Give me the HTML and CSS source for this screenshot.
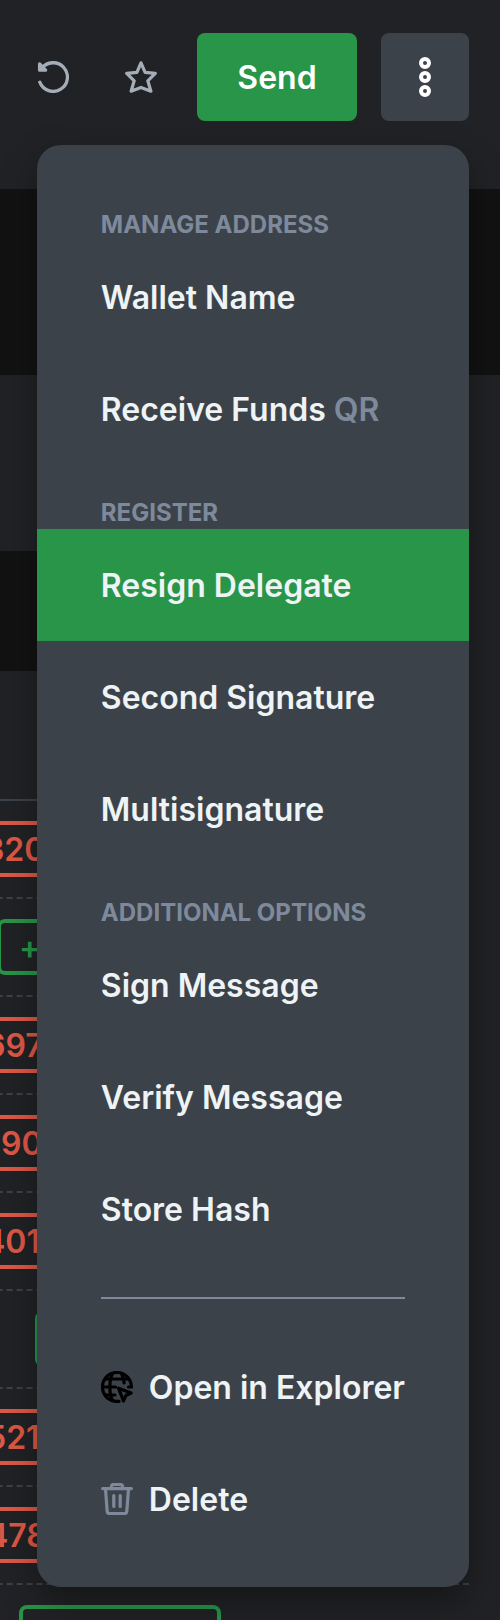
FILE: index.html
```html
<!DOCTYPE html>
<html lang="en">
<head>
<meta charset="utf-8">
<meta name="viewport" content="width=device-width, initial-scale=1">
<title>Wallet</title>
<link rel="stylesheet" href="styles.css">
</head>
<body>
<header class="toolbar">
  <div class="icon-buttons">
    <button class="icon-button" type="button" aria-label="Refresh">
      <svg class="icon" viewBox="0 0 32 32" fill="none" stroke="currentColor" stroke-width="3.3" stroke-linecap="round" stroke-linejoin="round"><path d="M2.8 21.2A14.3 14.3 0 1 0 4.6 7.6"/><path d="M2.6 3v6.2h6z" fill="currentColor"/></svg>
    </button>
    <button class="icon-button" type="button" aria-label="Star">
      <svg class="icon" viewBox="0 0 32 32" fill="none" stroke="currentColor" stroke-width="3.2" stroke-linecap="round" stroke-linejoin="round"><path d="M16 1.8l4.1 9.6 10.2 1-7.500 7.400 3.100 10.400-9.900-3.800-9.900 3.800 3.100-10.400-7.500-7.400 10.200-1z"/></svg>
    </button>
  </div>
  <div class="actions">
    <button class="send" type="button">Send</button>
    <div class="dropdown">
      <button class="more" type="button" aria-label="More options" aria-expanded="true">
        <svg class="dots" viewBox="0 0 12 40" fill="none" stroke="currentColor" stroke-width="4"><circle cx="6" cy="6" r="4"/><circle cx="6" cy="20" r="4"/><circle cx="6" cy="34" r="4"/></svg>
      </button>
      <nav class="menu" aria-label="Wallet options">
        <h2 class="menu-title">Manage Address</h2>
        <button class="menu-item" type="button">Wallet Name</button>
        <button class="menu-item" type="button"><span>Receive Funds <span class="hint">QR</span></span></button>
        <h2 class="menu-title">Register</h2>
        <button class="menu-item selected" type="button">Resign Delegate</button>
        <button class="menu-item" type="button">Second Signature</button>
        <button class="menu-item" type="button">Multisignature</button>
        <h2 class="menu-title">Additional Options</h2>
        <button class="menu-item" type="button">Sign Message</button>
        <button class="menu-item" type="button">Verify Message</button>
        <button class="menu-item" type="button">Store Hash</button>
        <hr class="divider">
        <button class="menu-item" type="button">
          <svg class="icon globe" viewBox="0 0 32 32" fill="none" stroke="currentColor" stroke-width="3.2" stroke-linecap="round" stroke-linejoin="round"><path d="M30.4 15.500A14.500 14.500 0 1 0 18 30.300"/><path d="M4.500 8h23M2 16h12.500M4.500 24H14M11.500 2.600C8 9 8 23 11.500 29.400M20.500 2.600c1.500 3 2.400 6 2.600 9.400M27.500 16h3"/><path d="M17.500 17.200l12.600 4.800-5.300 2.500-2.300 5.500z"/></svg>
          Open in Explorer
        </button>
        <button class="menu-item" type="button">
          <svg class="icon trash" viewBox="0 0 32 32" fill="none" stroke="currentColor" stroke-width="3.2" stroke-linecap="round" stroke-linejoin="round"><path d="M1.600 5.600h28.800M4.500 6l1.700 22.500q.2 2 2 2h15.600q1.800 0 2-2L27.500 6M10.500 5V3.500q0-2 2-2h7q2 0 2 2V5M12.800 12.500v11M19.200 12.500v11"/></svg>
          Delete
        </button>
      </nav>
    </div>
  </div>
</header>
<main>
  <section class="band band-tall"></section>
  <section class="summary"></section>
  <section class="band band-short"></section>
  <section class="transactions">
    <div class="table-head"></div>
    <div class="row"><span class="amount out" style="width:259px">320</span></div>
    <div class="row"><span class="amount in" style="width:224px">+</span></div>
    <div class="row"><span class="amount out" style="width:258px">697</span></div>
    <div class="row"><span class="amount out" style="width:242px">90</span></div>
    <div class="row"><span class="amount out" style="width:259px">401</span></div>
    <div class="row"><span class="amount in" style="width:186px"></span></div>
    <div class="row"><span class="amount out" style="width:257px">521</span></div>
    <div class="row"><span class="amount out" style="width:256px">478</span></div>
    <div class="row"><span class="amount in" style="width:202px"></span></div>
  </section>
</main>
</body>
</html>
```

FILE: styles.css
```css
* { box-sizing: border-box; }

body {
  margin: 0;
  height: 100vh;
  overflow: hidden;
  background: #212225;
  color: #eef3f5;
  font: 600 32px/39px Inter, "Liberation Sans", sans-serif;
}

button {
  border: 0;
  padding: 0;
  background: none;
  color: inherit;
  font: inherit;
  cursor: pointer;
}

svg { display: block; flex: none; }

.toolbar {
  display: flex;
  justify-content: flex-end;
  gap: 12px;
  padding: 33px 31px 68px 0;
}

.icon-buttons { display: flex; color: #a5adb9; }

.icon-button {
  display: grid;
  place-items: center;
  width: 88px;
  height: 88px;
}

.icon { width: 32px; height: 32px; }

.actions { display: flex; gap: 24px; }

.send {
  display: grid;
  place-items: center;
  min-width: 160px;
  height: 88px;
  padding: 0 40px;
  border-radius: 8px;
  background: #289548;
  color: #fff;
}

.dropdown { position: relative; }

.more {
  display: grid;
  place-items: center;
  width: 88px;
  height: 88px;
  border-radius: 8px;
  background: #3c4249;
  color: #fff;
}

.dots { width: 12px; height: 40px; }

.menu {
  position: absolute;
  z-index: 1;
  top: 100%;
  right: 0;
  width: max-content;
  min-width: 432px;
  margin-top: 24px;
  padding: 32px 0;
  border-radius: 24px;
  background: #3c4249;
  box-shadow: 0 16px 36px rgba(0, 0, 0, 0.35);
}

.menu-title {
  margin: 0;
  padding: 32px 64px 0;
  color: #7e8a9c;
  font-size: 24px;
  font-weight: 700;
  line-height: 32px;
  text-transform: uppercase;
}

.menu-item {
  display: flex;
  align-items: center;
  gap: 16px;
  width: 100%;
  min-height: 112px;
  padding: 0 64px;
  text-align: left;
  white-space: nowrap;
}

.selected { background: #289548; }

.hint, .trash { color: #7e8a9c; }

.globe { color: #000; }

.divider {
  height: 2px;
  margin: 32px 64px;
  border: 0;
  background: #7e8a9c;
}

.band { background: #121213; }
.band-tall { height: 186px; }
.band-short { height: 120px; margin-right: 64px; }
.summary { height: 176px; }

.transactions { margin: 0 31px 0 -33px; }

.table-head {
  height: 130px;
  border-bottom: 2px solid #3c4249;
}

.row {
  display: flex;
  padding: 20px 0;
  padding-right: calc(100% - 254px);
  justify-content: flex-end;
  border-bottom: 2px dashed #3c4249;
}

.amount {
  display: flex;
  align-items: center;
  flex: none;
  height: 56px;
  padding: 0 18px;
  border: 4px solid;
  border-radius: 8px;
}

.out { color: #de5846; }
.in { color: #289548; }
```
